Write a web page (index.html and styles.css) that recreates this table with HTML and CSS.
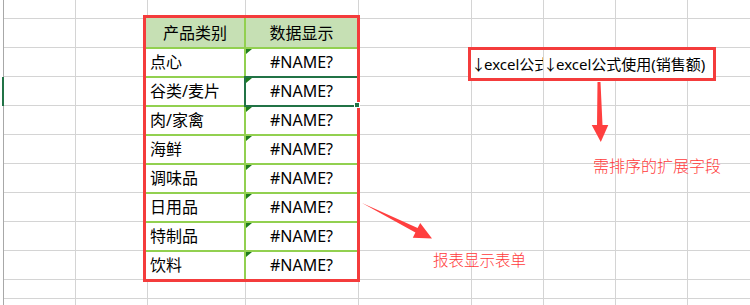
FILE: index.html
```html
<!DOCTYPE html>
<html lang="zh-CN">
<head>
<meta charset="utf-8">
<title>报表显示表单</title>
<link rel="stylesheet" href="styles.css">
</head>
<body>
<div class="sheet">
  <div class="row-mark"></div>
  <div class="sheet-content">
    <div class="report">
      <div class="cell head">产品类别</div>
      <div class="cell head">数据显示</div>
      <div class="cell name">点心</div>
      <div class="cell value">#NAME?</div>
      <div class="cell name">谷类/麦片</div>
      <div class="cell value is-active">#NAME?<span class="fill-handle"></span></div>
      <div class="cell name">肉/家禽</div>
      <div class="cell value">#NAME?</div>
      <div class="cell name">海鲜</div>
      <div class="cell value">#NAME?</div>
      <div class="cell name">调味品</div>
      <div class="cell value">#NAME?</div>
      <div class="cell name">日用品</div>
      <div class="cell value">#NAME?</div>
      <div class="cell name">特制品</div>
      <div class="cell value">#NAME?</div>
      <div class="cell name">饮料</div>
      <div class="cell value">#NAME?</div>
    </div>
    <div class="note-box">
      <div class="note-cell clip"><span class="down">↓</span>excel公式使用(销售额)</div>
      <div class="note-cell full"><span class="down">↓</span>excel公式使用(销售额)</div>
    </div>
  </div>
  <svg class="arrows" width="750" height="305" viewBox="0 0 750 305" aria-hidden="true">
    <polygon points="597.5,82 600.5,82 602.5,125 608.3,125 600.8,142 591.7,125 597,125" fill="#ff3f3f"/>
    <polygon points="362,203 417.6,228.1 420.2,222.9 432,238.5 412.8,237.7 415.4,232.5" fill="#ff3f3f"/>
  </svg>
  <span class="note note-sort">需排序的扩展字段</span>
  <span class="note note-report">报表显示表单</span>
</div>
</body>
</html>
```

FILE: styles.css
```css
html, body {
  margin: 0;
  padding: 0;
  background: #ffffff;
}

.sheet {
  position: relative;
  width: 750px;
  height: 305px;
  overflow: hidden;
  font-family: "Noto Sans", "Noto Sans CJK SC", sans-serif;
  color: #000;
  background-color: #ffffff;
  background-image:
    linear-gradient(#a8a8a8, #a8a8a8),
    linear-gradient(#d4d4d4, #d4d4d4),
    linear-gradient(#d4d4d4, #d4d4d4),
    linear-gradient(#d4d4d4, #d4d4d4),
    linear-gradient(#d4d4d4, #d4d4d4),
    linear-gradient(#d4d4d4, #d4d4d4),
    linear-gradient(#d4d4d4, #d4d4d4),
    linear-gradient(#d4d4d4, #d4d4d4),
    linear-gradient(#d4d4d4, #d4d4d4),
    repeating-linear-gradient(to bottom, #d4d4d4 0 1px, transparent 1px 29px),
    linear-gradient(#d4d4d4, #d4d4d4);
  background-repeat: no-repeat;
  background-position:
    3px 0, 75px 0, 147px 0, 245px 0, 358px 0, 471px 0, 543px 0, 615px 0, 687px 0,
    4px 18px, 4px 298px;
  background-size:
    1px 100%, 1px 100%, 1px 100%, 1px 100%, 1px 100%, 1px 100%, 1px 100%, 1px 100%, 1px 100%,
    100% 263px, 100% 1px;
}

.row-mark {
  position: absolute;
  left: 2px;
  top: 77px;
  width: 2px;
  height: 29px;
  background: #217346;
}

.sheet-content {
  display: flex;
  align-items: flex-start;
  gap: 108px;
  padding: 15px 0 0 143px;
}

.report {
  display: grid;
  grid-template-columns: 98px 111px;
  grid-template-rows: 29px repeat(8, 27px);
  gap: 2px;
  background: #92d050;
  border: 3px solid #f43c3c;
  font-size: 16px;
}

.cell {
  background: #ffffff;
  line-height: 27px;
  white-space: nowrap;
}

.head {
  background: #c6e0b4;
  text-align: center;
  line-height: 29px;
  padding-top: 1px;
  box-sizing: border-box;
}

.name {
  padding-left: 4px;
}

.value {
  position: relative;
  text-align: center;
}

.value::before {
  content: "";
  position: absolute;
  left: 0;
  top: 0;
  width: 0;
  height: 0;
  border-top: 5px solid #1e7b1e;
  border-right: 6px solid transparent;
}

.is-active::after {
  content: "";
  position: absolute;
  left: -2px;
  top: -2px;
  right: 0;
  bottom: -2px;
  border: 2px solid #217346;
  border-right: 0;
}

.fill-handle {
  position: absolute;
  right: -3px;
  bottom: -3px;
  width: 4px;
  height: 4px;
  background: #217346;
  border: 1px solid #ffffff;
  z-index: 2;
}

.note-box {
  display: flex;
  margin-top: 32px;
  width: 242px;
  height: 28px;
  border: 3px solid #f43c3c;
  background: #ffffff;
  font-size: 15px;
  line-height: 28px;
}

.note-cell {
  white-space: nowrap;
  overflow: hidden;
  box-sizing: border-box;
}

.note-cell.clip {
  width: 73px;
  flex: 0 0 73px;
  padding-left: 4px;
  border-right: 1px solid #d4d4d4;
}

.note-cell.full {
  flex: 1 1 auto;
  padding-left: 3px;
}

.down {
  font-family: "Noto Sans CJK SC", sans-serif;
  margin: 0 -2px 0 -4px;
}

.arrows {
  position: absolute;
  left: 0;
  top: 0;
  pointer-events: none;
}

.note {
  position: absolute;
  font-family: "Noto Sans CJK SC", sans-serif;
  font-weight: 300;
  color: #ff3b3b;
  font-size: 16px;
  line-height: 20px;
  white-space: nowrap;
}

.note-sort {
  left: 593px;
  top: 155px;
}

.note-report {
  left: 433px;
  top: 249px;
  font-size: 15.5px;
}
```
